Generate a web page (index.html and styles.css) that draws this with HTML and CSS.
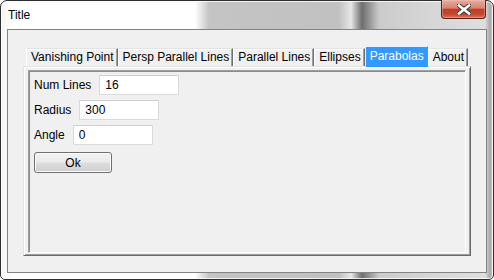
FILE: index.html
```html
<!DOCTYPE html>
<html lang="en">
<head>
    <meta charset="UTF-8">
    <title>Title</title>
    <link rel="stylesheet" href="styles.css">
</head>
<body>
    <div class="window">
        <div class="titlebar">
            <span class="title">Title</span>
            <div class="close-btn">
                <svg width="14" height="11" viewBox="0 0 14 11">
                    <path d="M2 1.5 L12 9.5 M12 1.5 L2 9.5" stroke="#3a3a3a" stroke-width="4.6" stroke-linecap="square" fill="none"/>
                    <path d="M2 1.5 L12 9.5 M12 1.5 L2 9.5" stroke="#ffffff" stroke-width="2.6" stroke-linecap="square" fill="none"/>
                </svg>
            </div>
        </div>

        <div class="client">
            <div class="tabs">
                <div class="tab">Vanishing Point</div>
                <div class="tab">Persp Parallel Lines</div>
                <div class="tab">Parallel Lines</div>
                <div class="tab">Ellipses</div>
                <div class="tab active">Parabolas</div>
                <div class="tab">About</div>
            </div>
            <div class="panel">
                <div class="page">
                    <div class="form-row">
                        <label>Num Lines</label>
                        <input class="field" type="text" value="16">
                    </div>
                    <div class="form-row">
                        <label>Radius</label>
                        <input class="field" type="text" value="300">
                    </div>
                    <div class="form-row">
                        <label>Angle</label>
                        <input class="field" type="text" value="0">
                    </div>
                    <button class="ok-btn">Ok</button>
                </div>
            </div>
        </div>
    </div>
</body>
</html>
```

FILE: styles.css
```css
body {
    margin: 0;
    width: 494px;
    height: 280px;
    overflow: hidden;
    font-family: 'Liberation Sans', Arial, sans-serif;
    font-size: 12px;
    color: #000;
    background: #fff;
}

/* Marco de la ventana */
.window {
    width: 494px;
    height: 280px;
    box-sizing: border-box;
    border: 1px solid #2e2e2e;
    border-radius: 7px 7px 5px 5px;
    padding: 0 6px 6px 6px;
    display: flex;
    flex-direction: column;
    box-shadow: inset 0 0 0 1px rgba(255, 255, 255, 0.8);
    background: linear-gradient(90deg,
        #f4f4f4 0px,
        #ffffff 12px,
        #ffffff 194px,
        #c4c4c4 208px,
        #c1c1c1 338px,
        #e6e6e6 350px,
        #6e6e6e 361px,
        #8e8e8e 367px,
        #cbcbcb 378px,
        #d6d6d6 430px,
        #dedede 484px,
        #a8a8a8 489px,
        #d0d0d0 492px);
}

.titlebar {
    height: 28px;
    display: flex;
    justify-content: space-between;
    align-items: flex-start;
    flex-shrink: 0;
}

.title {
    line-height: 28px;
    padding-left: 1px;
    font-size: 12px;
}

.close-btn {
    width: 45px;
    height: 19px;
    margin-top: -1px;
    margin-right: 1px;
    box-sizing: border-box;
    border: 1px solid #5e1d12;
    border-top: none;
    border-radius: 0 0 4px 4px;
    display: flex;
    justify-content: center;
    align-items: center;
    background: linear-gradient(180deg,
        #e8ab9d 0%,
        #d68373 45%,
        #c23e25 52%,
        #c5462c 78%,
        #db7358 100%);
    box-shadow: inset 0 0 0 1px rgba(255, 210, 200, 0.35);
}

/* Area cliente */
.client {
    flex: 1;
    border: 1px solid #838383;
    background: #f0f0f0;
    padding: 16px 0 0 15px;
    display: flex;
    flex-direction: column;
}

.tabs {
    display: flex;
    align-items: flex-end;
    height: 20px;
    margin-left: 3px;
}

.tab {
    height: 18px;
    line-height: 17px;
    box-sizing: border-box;
    padding: 0 3px 0 4px;
    border-top: 1px solid #e3e3e3;
    border-left: 1px solid #ffffff;
    border-right: 1px solid #6f6f6f;
    box-shadow: inset -1px 0 0 #a0a0a0, inset 0 1px 0 #ffffff;
    background: #f0f0f0;
    white-space: nowrap;
}

.tab.active {
    height: 21px;
    line-height: 18px;
    margin-bottom: -1px;
    position: relative;
    z-index: 1;
    background: #3399ff;
    color: #fff;
    border-color: #e9f2fb;
    border-right: 1px solid #3399ff;
    box-shadow: none;
}

.panel {
    width: 448px;
    height: 190px;
    box-sizing: border-box;
    border-top: 1px solid #e3e3e3;
    border-left: 1px solid #e3e3e3;
    border-right: 1px solid #696969;
    border-bottom: 1px solid #696969;
    box-shadow: inset 1px 1px 0 #ffffff, inset -1px -1px 0 #a0a0a0;
    padding: 3px 4px 2px 4px;
    display: flex;
}

.page {
    flex: 1;
    border-top: 1px solid #a0a0a0;
    border-left: 1px solid #a0a0a0;
    border-right: 1px solid #ffffff;
    border-bottom: 1px solid #ffffff;
    box-shadow: inset 1px 1px 0 #8a8a8a;
    padding: 4px 0 0 5px;
    display: flex;
    flex-direction: column;
    align-items: flex-start;
    gap: 5px;
}

.form-row {
    display: flex;
    align-items: center;
    gap: 8px;
    height: 20px;
}

.field {
    width: 80px;
    height: 20px;
    box-sizing: border-box;
    margin: 0;
    padding: 0 0 0 5px;
    border: 1px solid #dadada;
    border-top-color: #cfcfcf;
    background: #fff;
    font-family: 'Liberation Sans', Arial, sans-serif;
    font-size: 12px;
    color: #000;
    outline: none;
}

.ok-btn {
    margin-top: 2px;
    width: 78px;
    height: 21px;
    box-sizing: border-box;
    border: 1px solid #707070;
    border-radius: 3px;
    padding: 0;
    font-family: 'Liberation Sans', Arial, sans-serif;
    font-size: 12px;
    color: #000;
    background: linear-gradient(180deg, #f2f2f2 0%, #ebebeb 48%, #dddddd 52%, #cfcfcf 100%);
    box-shadow: inset 0 0 0 1px #fbfbfb;
}
```
